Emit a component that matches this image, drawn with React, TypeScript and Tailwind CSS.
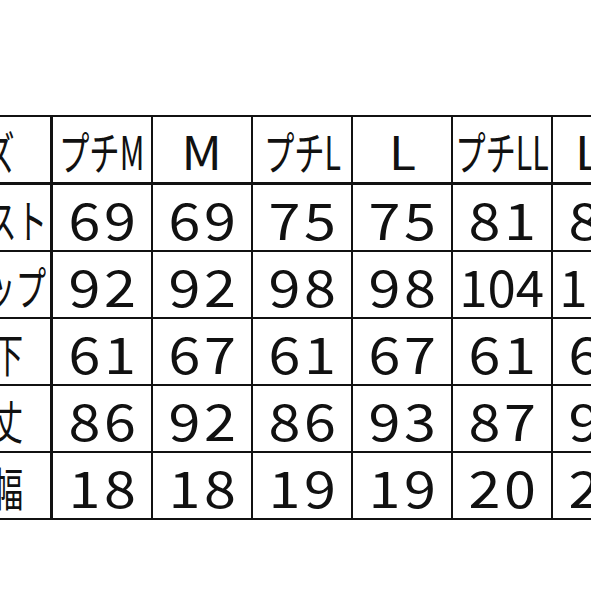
const font = { fontFamily: '"Noto Sans CJK JP", "Noto Sans", sans-serif' };

const sizes = [
  { name: "プチM", petite: true },
  { name: "M", petite: false },
  { name: "プチL", petite: true },
  { name: "L", petite: false },
  { name: "プチLL", petite: true },
  { name: "LL", petite: false },
];

const rows = [
  { label: "バスト", pad: "pr-[3px]", values: [69, 69, 75, 75, 81, 87] },
  { label: "ヒップ", pad: "pr-[4px]", values: [92, 92, 98, 98, 104, 110] },
  { label: "股下", pad: "pr-[27px]", values: [61, 67, 61, 67, 61, 67] },
  { label: "着丈", pad: "pr-[27px]", values: [86, 92, 86, 93, 87, 93] },
  { label: "裾幅", pad: "pr-[27px]", values: [18, 18, 19, 19, 20, 20] },
];

const Label = ({ text, pad }: { text: string; pad: string }) => (
  <div className={`flex w-[53px] shrink-0 items-center justify-end overflow-hidden border-r-[3px] border-[#111] ${pad}`}>
    <span className="origin-right scale-x-[0.66] whitespace-nowrap text-[46px] leading-none">{text}</span>
  </div>
);

export default function App() {
  return (
    <div className="h-[591px] w-full overflow-hidden bg-white text-[#111]" style={font}>
      <div className="mt-[115px] w-[656px]">
        <div className="flex h-[70px] border-y-2 border-b-[3px] border-[#111]">
          <Label text="サイズ" pad="pr-[35px]" />
          {sizes.map((s) => (
            <div key={s.name} className="flex w-[100px] shrink-0 items-center justify-center border-r-2 border-[#111]">
              <span
                className={`whitespace-nowrap text-[46px] leading-none ${s.petite ? "scale-x-[0.66]" : "scale-x-[1.08]"}`}
              >
                {s.name}
              </span>
            </div>
          ))}
        </div>
        {rows.map((r) => (
          <div key={r.label} className="flex h-[67px] border-b-2 border-[#111]">
            <Label text={r.label} pad={r.pad} />
            {r.values.map((v, i) => (
              <div key={i} className="flex w-[100px] shrink-0 items-center justify-center border-r-2 border-[#111]">
                {v >= 100 ? (
                  <span className="scale-x-[1.02] whitespace-nowrap text-[50px] leading-none">{v}</span>
                ) : (
                  <span className="scale-x-[1.15] pl-[3px] text-[50px] leading-none tracking-[3px]">{v}</span>
                )}
              </div>
            ))}
          </div>
        ))}
      </div>
    </div>
  );
}
